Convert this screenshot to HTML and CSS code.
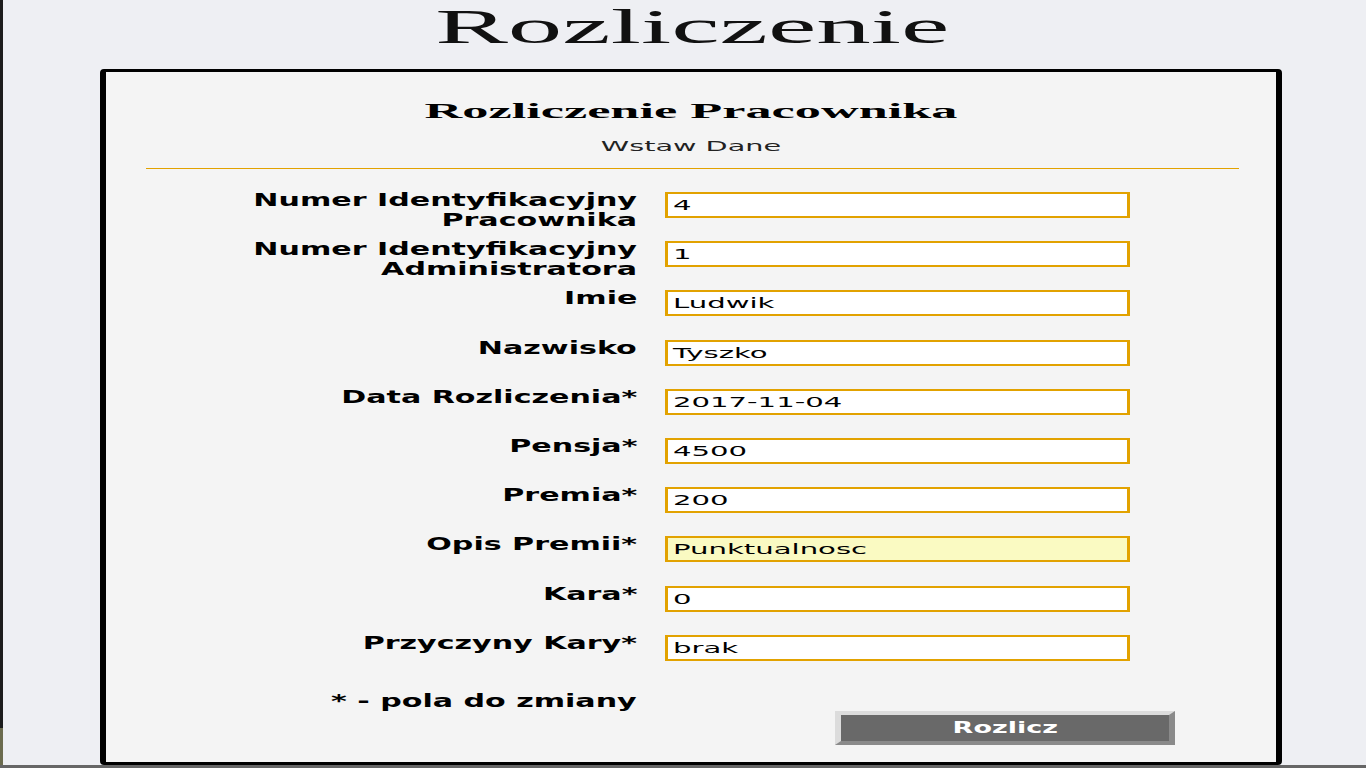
FILE: index.html
```html
<!DOCTYPE html>
<html lang="pl">
<head>
<meta charset="utf-8">
<title>Rozliczenie</title>
<link rel="stylesheet" href="styles.css">
</head>
<body>
<div class="desktop">
  <div class="edge"></div>
  <main class="page">
    <h1 class="title"><span class="stretch-title">Rozliczenie</span></h1>
    <section class="card">
      <h2 class="card-title"><span class="stretch-h2">Rozliczenie Pracownika</span></h2>
      <p class="subtitle"><span class="stretch-sub">Wstaw Dane</span></p>
      <hr class="rule">
      <form class="form">
        <label class="label"><span class="stretch-label">Numer Identyfikacyjny Pracownika</span></label>
        <div class="field"><span class="stretch-value">4</span></div>

        <label class="label"><span class="stretch-label">Numer Identyfikacyjny Administratora</span></label>
        <div class="field"><span class="stretch-value">1</span></div>

        <label class="label"><span class="stretch-label">Imie</span></label>
        <div class="field"><span class="stretch-value">Ludwik</span></div>

        <label class="label"><span class="stretch-label">Nazwisko</span></label>
        <div class="field"><span class="stretch-value">Tyszko</span></div>

        <label class="label"><span class="stretch-label">Data Rozliczenia*</span></label>
        <div class="field"><span class="stretch-value">2017-11-04</span></div>

        <label class="label"><span class="stretch-label">Pensja*</span></label>
        <div class="field"><span class="stretch-value">4500</span></div>

        <label class="label"><span class="stretch-label">Premia*</span></label>
        <div class="field"><span class="stretch-value">200</span></div>

        <label class="label"><span class="stretch-label">Opis Premii*</span></label>
        <div class="field field-filled"><span class="stretch-value">Punktualnosc</span></div>

        <label class="label"><span class="stretch-label">Kara*</span></label>
        <div class="field"><span class="stretch-value">0</span></div>

        <label class="label"><span class="stretch-label">Przyczyny Kary*</span></label>
        <div class="field"><span class="stretch-value">brak</span></div>
      </form>
      <div class="note"><span class="stretch-label">* - pola do zmiany</span></div>
      <div class="actions">
        <button class="submit" type="button"><span class="stretch-btn">Rozlicz</span></button>
      </div>
    </section>
  </main>
</div>
<div class="taskbar"></div>
</body>
</html>
```

FILE: styles.css
```css
html, body {
  margin: 0;
  padding: 0;
}

body {
  width: 1366px;
  height: 768px;
  overflow: hidden;
  background: #eeeff3;
  font-family: "DejaVu Sans", Verdana, sans-serif;
  color: #000;
}

.desktop {
  display: flex;
  height: 765px;
}

.edge {
  width: 3px;
  flex: none;
  background: linear-gradient(to bottom, #1c1c1c 0, #1c1c1c 728px, #6b6b4e 728px);
}

.taskbar {
  height: 3px;
  background: #666666;
}

.page {
  flex: 1;
  display: flex;
  flex-direction: column;
}

.title {
  margin: 0 0 15px 0;
  padding-left: 16px;
  height: 54px;
  font-family: "Liberation Serif", "Times New Roman", serif;
  font-weight: normal;
  font-size: 48px;
  line-height: 54px;
  text-align: center;
  color: #111;
}

.stretch-title {
  display: inline-block;
  transform: scaleX(2.27);
  transform-origin: center;
}

.card {
  margin-left: 97px;
  width: 1170px;
  height: 690px;
  border-style: solid;
  border-color: #000;
  border-width: 3px 6px;
  border-radius: 4px;
  background: #f4f4f4;
  padding-top: 27px;
  box-sizing: content-box;
}

.card-title {
  margin: 0;
  height: 24px;
  font-family: "Liberation Serif", "Times New Roman", serif;
  font-weight: bold;
  font-size: 21px;
  line-height: 24px;
  text-align: center;
  color: #000;
}

.stretch-h2 {
  display: inline-block;
  transform: scaleX(2.49);
  transform-origin: center;
}

.subtitle {
  margin: 14px 0 0 0;
  height: 18px;
  font-size: 14px;
  line-height: 18px;
  text-align: center;
  color: #222;
}

.stretch-sub {
  display: inline-block;
  transform: scaleX(2.05);
  transform-origin: center;
}

.rule {
  margin: 13px 37px 0 40px;
  height: 0;
  border: 0;
  border-top: 1px solid #e2a200;
}

.form {
  margin-top: 23px;
  display: grid;
  grid-template-columns: 531px 465px;
  grid-auto-rows: 49.2px;
  column-gap: 28px;
  align-items: start;
}

.label {
  margin-top: -2px;
  text-align: right;
  font-weight: bold;
  font-size: 17px;
  line-height: 20px;
}

.stretch-label {
  display: inline-block;
  max-width: 300px;
  text-align: right;
  transform: scaleX(1.77);
  transform-origin: right center;
}

.field {
  box-sizing: border-box;
  height: 26px;
  border-style: solid;
  border-color: #e2a200;
  border-width: 2px 3px;
  background: #ffffff;
  padding-left: 5px;
  display: flex;
  align-items: center;
  font-size: 14px;
  color: #000;
  overflow: hidden;
}

.field-filled {
  background: #fafac2;
}

.stretch-value {
  display: inline-block;
  white-space: nowrap;
  transform: scaleX(2.08);
  transform-origin: left center;
}

.note {
  margin-top: 7px;
  width: 531px;
  height: 20px;
  text-align: right;
  font-weight: bold;
  font-size: 17px;
  line-height: 20px;
}

.actions {
  display: flex;
  padding-left: 729px;
}

.submit {
  box-sizing: border-box;
  width: 340px;
  height: 34px;
  margin: 0;
  padding: 0;
  border-style: solid;
  border-width: 4px 6px;
  border-color: #dcdcdc #8a8a8a #8a8a8a #dcdcdc;
  background: #696969;
  color: #ffffff;
  font-family: "DejaVu Sans", Verdana, sans-serif;
  font-weight: bold;
  font-size: 15px;
  line-height: 20px;
}

.stretch-btn {
  display: inline-block;
  transform: scaleX(1.8);
  transform-origin: center;
}
```
